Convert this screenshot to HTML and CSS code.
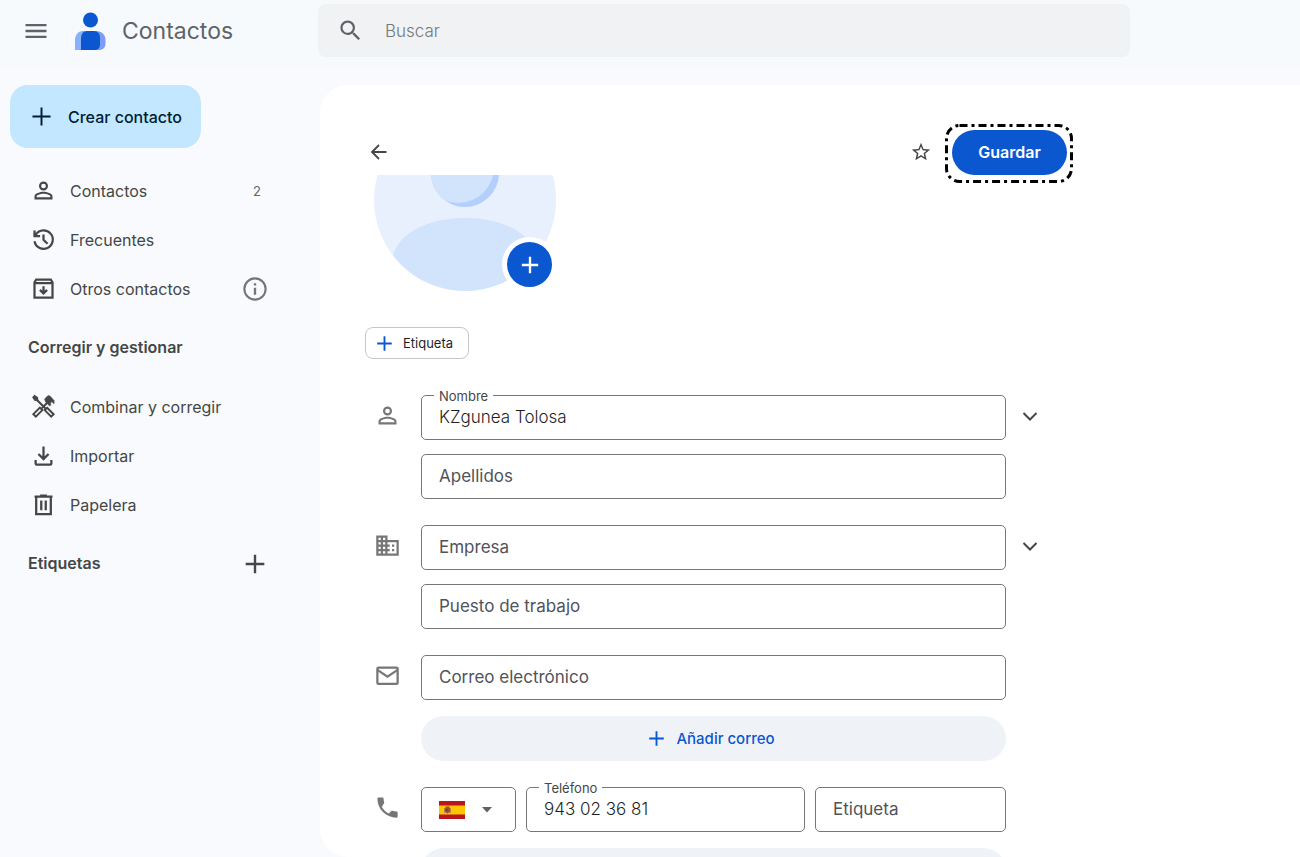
FILE: index.html
```html
<!DOCTYPE html>
<html lang="es">
<head>
<meta charset="utf-8">
<meta name="viewport" content="width=device-width, initial-scale=1">
<title>Contactos</title>
<link rel="stylesheet" href="styles.css">
</head>
<body>
<header class="topbar">
  <div class="brand">
    <button class="icon-btn" type="button" aria-label="Menú principal">
      <svg width="28" height="28" viewBox="0 0 24 24" fill="currentColor"><path d="M3 18h18v-2H3v2zm0-5h18v-2H3v2zm0-7v2h18V6H3z"/></svg>
    </button>
    <svg class="logo" width="32" height="40" viewBox="0 0 32 40" aria-hidden="true">
      <path d="M9 20h8v19H1V29c0-5 3-9 8-9z" fill="#8ab0fb"/>
      <path d="M15 20h7c6 0 9.500 4 9.500 9v3c0 5-3 7-6.500 7H15z" fill="#7c9cf8"/>
      <path d="M13 20h7c4 0 6 3 6 7v6c0 4-2 6-6 6H7V28c0-5 2-8 6-8z" fill="#0b57d0"/>
      <circle cx="16.500" cy="9" r="7.500" fill="#0b57d0"/>
    </svg>
    <span class="brand-name">Contactos</span>
  </div>
  <form class="search" role="search">
    <button class="icon-btn" type="button" aria-label="Buscar">
      <svg width="27" height="27" viewBox="0 0 24 24" fill="currentColor"><path d="M15.500 14h-.79l-.28-.27A6.470 6.470 0 0 0 16 9.500 6.500 6.500 0 1 0 9.500 16c1.610 0 3.090-.59 4.230-1.570l.27.28v.79l5 4.990L20.490 19l-4.990-5zm-6 0C7.010 14 5 11.990 5 9.500S7.010 5 9.500 5 14 7.010 14 9.500 11.990 14 9.500 14z"/></svg>
    </button>
    <input class="search-input" type="search" placeholder="Buscar" aria-label="Buscar">
  </form>
</header>

<div class="layout">
  <nav class="sidebar" aria-label="Navegación">
    <button class="create" type="button">
      <svg width="31" height="31" viewBox="0 0 24 24" fill="currentColor"><path d="M19 12.750h-6.250V19h-1.500v-6.250H5v-1.500h6.250V5h1.500v6.250H19z"/></svg>
      <span>Crear contacto</span>
    </button>
    <ul class="nav">
      <li class="nav-item"><a class="nav-link" href="#contactos">
        <svg width="27" height="27" viewBox="0 0 24 24" fill="currentColor"><path d="M12 12a4 4 0 1 0 0-8 4 4 0 0 0 0 8zm0-6.100a2.100 2.100 0 1 1 0 4.200 2.100 2.100 0 0 1 0-4.200zM12 13c-2.700 0-8 1.340-8 4v3h16v-3c0-2.660-5.330-4-8-4zm6.100 5.100H5.900V17c0-.64 3.130-2.100 6.100-2.100s6.100 1.460 6.100 2.100z"/></svg>
        Contactos</a><span class="count">2</span></li>
      <li class="nav-item"><a class="nav-link" href="#frecuentes">
        <svg width="27" height="27" viewBox="0 0 24 24" fill="none" stroke="currentColor" stroke-width="2"><path d="M4 13.500A8.200 8.200 0 1 0 5.300 7.500L4 9M4 4v5h5M12 7.500v4.700l3.600 3.600"/></svg>
        Frecuentes</a></li>
      <li class="nav-item"><a class="nav-link" href="#otros">
        <svg width="27" height="27" viewBox="0 0 24 24" fill="none" stroke="currentColor" stroke-width="2"><path d="M4 6.500 5.500 4h13L20 6.500V20H4zM4 7.300h16M12 10v6M8.800 13.200l3.200 3.200 3.200-3.200"/></svg>
        Otros contactos</a>
        <button class="icon-btn info" type="button" aria-label="Información">
          <svg width="28" height="28" viewBox="0 0 24 24" fill="currentColor"><path d="M11 7h2v2h-2zm0 4h2v6h-2zm1-9a10 10 0 1 0 0 20 10 10 0 0 0 0-20zm0 18.200a8.200 8.200 0 1 1 0-16.400 8.200 8.200 0 0 1 0 16.400z"/></svg>
        </button></li>
    </ul>
    <h2 class="nav-heading">Corregir y gestionar</h2>
    <ul class="nav">
      <li class="nav-item"><a class="nav-link" href="#combinar">
        <svg width="27" height="27" viewBox="0 0 24 24" fill="none" stroke="currentColor" stroke-width="1.800"><path d="M5.500 5.500 14 14M16 8 10.500 13.500"/><path d="M2.500 3.800 4 2.300 6.700 4 6.900 6.700 4.200 6.500z" fill="currentColor" stroke-width="1"/><path d="M8.800 13l2.200 2.200-5.800 5.800L3 18.800z"/><path d="M15.200 13.200l5.800 5.600-2.200 2.200-5.700-5.800z"/><path d="M13 5.400 16 2.200l2 .6 3.500 4-.2 2.700-1.900-1.800-1.300 1.400.5 1.400-1.200 1-3.700-3.800z" fill="currentColor" stroke-width=".500"/></svg>
        Combinar y corregir</a></li>
      <li class="nav-item"><a class="nav-link" href="#importar">
        <svg width="27" height="27" viewBox="0 0 24 24" fill="none" stroke="currentColor" stroke-width="2"><path d="M12 4v11M7.500 10.700 12 15.200l4.500-4.500M5 16v3a1 1 0 0 0 1 1h12a1 1 0 0 0 1-1v-3"/></svg>
        Importar</a></li>
      <li class="nav-item"><a class="nav-link" href="#papelera">
        <svg width="27" height="27" viewBox="0 0 24 24" fill="none" stroke="currentColor" stroke-width="2"><path d="M4 5h16M9 4h6M5.500 5v15.500h13V5M10 8.500v8.500M14 8.500v8.500"/></svg>
        Papelera</a></li>
    </ul>
    <div class="nav-heading-row">
      <h2 class="nav-heading">Etiquetas</h2>
      <button class="icon-btn" type="button" aria-label="Crear etiqueta">
        <svg width="32" height="32" viewBox="0 0 24 24" fill="currentColor"><path d="M19 12.900h-6.100V19h-1.800v-6.100H5v-1.800h6.100V5h1.800v6.100H19z"/></svg>
      </button>
    </div>
  </nav>

  <main class="panel">
    <div class="toolbar">
      <button class="icon-btn" type="button" aria-label="Atrás">
        <svg width="28" height="24" viewBox="0 0 28 24" fill="none" stroke="currentColor" stroke-width="1.800"><path d="M21.500 12H7.500M14 5l-7 7 7 7"/></svg>
      </button>
      <div class="actions">
        <button class="icon-btn" type="button" aria-label="Destacar">
          <svg width="22" height="22" viewBox="0 0 24 24" fill="currentColor"><path d="M22 9.240l-7.190-.62L12 2 9.190 8.630 2 9.240l5.460 4.730L5.820 21 12 17.270 18.180 21l-1.630-7.030L22 9.240zM12 15.400l-3.760 2.270 1-4.280-3.320-2.880 4.380-.38L12 6.100l1.710 4.040 4.380.38-3.320 2.880 1 4.280L12 15.400z"/></svg>
        </button>
        <div class="save-wrap">
          <button class="save" type="button">Guardar</button>
          <svg class="marker" viewBox="0 0 128 59" aria-hidden="true"><rect x="1.500" y="1.500" width="125" height="56" rx="13" fill="none" stroke="#000" stroke-width="3" stroke-dasharray="8 4 3 4"/></svg>
        </div>
      </div>
    </div>

    <div class="scroller">
      <div class="photo">
        <svg class="avatar" viewBox="0 0 182 182" aria-hidden="true">
          <defs>
            <clipPath id="disc"><circle cx="91" cy="91" r="91"/></clipPath>
            <clipPath id="head"><circle cx="91" cy="64" r="34"/></clipPath>
          </defs>
          <g clip-path="url(#disc)">
            <rect width="182" height="182" fill="#e8f0fe"/>
            <circle cx="91" cy="64" r="34" fill="#b4cffb"/>
            <circle cx="84" cy="58" r="36" fill="#d2e3fc" clip-path="url(#head)"/>
            <path d="M18 150c5-26 36-41 73-41s68 15 73 41v32H18z" fill="#d2e3fc"/>
          </g>
        </svg>
        <button class="photo-add" type="button" aria-label="Añadir foto">
          <svg width="28" height="28" viewBox="0 0 24 24" fill="currentColor"><path d="M19 13h-6v6h-2v-6H5v-2h6V5h2v6h6z"/></svg>
        </button>
      </div>

      <button class="chip" type="button">
        <svg width="25" height="25" viewBox="0 0 24 24" fill="currentColor"><path d="M19 12.900h-6.100V19h-1.800v-6.100H5v-1.800h6.100V5h1.800v6.100H19z"/></svg>
        Etiqueta
      </button>

      <form class="form">
        <section class="group">
          <svg class="group-icon" width="27" height="27" viewBox="0 0 24 24" fill="currentColor"><path d="M12 12a4 4 0 1 0 0-8 4 4 0 0 0 0 8zm0-6.100a2.100 2.100 0 1 1 0 4.200 2.100 2.100 0 0 1 0-4.200zM12 13c-2.700 0-8 1.340-8 4v3h16v-3c0-2.660-5.330-4-8-4zm6.100 5.100H5.900V17c0-.64 3.130-2.100 6.100-2.100s6.100 1.460 6.100 2.100z"/></svg>
          <div class="fields">
            <div class="field"><input class="box" id="nombre" type="text" value="KZgunea Tolosa"><label class="float" for="nombre">Nombre</label></div>
            <div class="field"><input class="box" type="text" placeholder="Apellidos" aria-label="Apellidos"></div>
          </div>
          <button class="icon-btn more" type="button" aria-label="Mostrar más campos de nombre"><svg width="24" height="24" viewBox="0 0 24 24" fill="none" stroke="currentColor" stroke-width="2"><path d="M5.500 9l6.500 6.500L18.500 9"/></svg></button>
        </section>

        <section class="group">
          <svg class="group-icon" width="27" height="27" viewBox="0 0 24 24" fill="currentColor"><path d="M12 7V3H2v18h20V7H12zM6 19H4v-2h2v2zm0-4H4v-2h2v2zm0-4H4V9h2v2zm0-4H4V5h2v2zm4 12H8v-2h2v2zm0-4H8v-2h2v2zm0-4H8V9h2v2zm0-4H8V5h2v2zm10 12h-8v-2h2v-2h-2v-2h2v-2h-2V9h8v10zm-2-8h-2v2h2v-2zm0 4h-2v2h2v-2z"/></svg>
          <div class="fields">
            <div class="field"><input class="box" type="text" placeholder="Empresa" aria-label="Empresa"></div>
            <div class="field"><input class="box" type="text" placeholder="Puesto de trabajo" aria-label="Puesto de trabajo"></div>
          </div>
          <button class="icon-btn more" type="button" aria-label="Mostrar más campos de empresa"><svg width="24" height="24" viewBox="0 0 24 24" fill="none" stroke="currentColor" stroke-width="2"><path d="M5.500 9l6.500 6.500L18.500 9"/></svg></button>
        </section>

        <section class="group">
          <svg class="group-icon" width="27" height="27" viewBox="0 0 24 24" fill="none" stroke="currentColor" stroke-width="2"><rect x="3" y="5" width="18" height="14.500" rx="1"/><path d="M3 7l9 6 9-6"/></svg>
          <div class="fields">
            <div class="field"><input class="box" type="email" placeholder="Correo electrónico" aria-label="Correo electrónico"></div>
            <button class="add" type="button">
              <svg width="25" height="25" viewBox="0 0 24 24" fill="currentColor"><path d="M19 12.900h-6.100V19h-1.800v-6.100H5v-1.800h6.100V5h1.800v6.100H19z"/></svg>
              Añadir correo
            </button>
          </div>
        </section>

        <section class="group">
          <svg class="group-icon" width="27" height="27" viewBox="0 0 24 24" fill="currentColor"><path d="M6.540 5c.06.89.21 1.760.45 2.590L8 11l-1.380-.21c1.440 2.830 3.760 5.140 6.590 6.590l2.200-2.200c.27-.27.67-.36 1.020-.24 1.120.37 2.330.57 3.570.57.55 0 1 .45 1 1V20c0 .55-.45 1-1 1C10.610 21 3 13.390 3 4c0-.55.45-1 1-1h3.500c.55 0 1 .45 1 1 0 1.250.2 2.450.57 3.570.11.35.03.74-.25 1.020l-2.200 2.200z"/></svg>
          <div class="fields">
            <div class="phone">
              <button class="box country" type="button" aria-haspopup="listbox" aria-label="País: España">
                <svg width="26" height="18" viewBox="0 0 26 18" aria-hidden="true"><path fill="#b8151c" d="M0 0h26v18H0z"/><path fill="#ffc400" d="M0 4.500h26v9H0z"/><path d="M5 7h1v5H5zM11 7h1v5h-1z" fill="#a58b45"/><path d="M6.500 5.500h4V7l.5.500V11l-2.500 1.500L6 11V7.500l.500-.500z" fill="#ad4a1e"/><path d="M7 8h1.500v2H7z" fill="#6b3b28"/></svg>
                <svg width="10" height="6" viewBox="0 0 10 6" fill="#5f6368"><path d="M0 0h10L5 5.500z"/></svg>
              </button>
              <div class="field"><input class="box" id="telefono" type="tel" value="943 02 36 81"><label class="float" for="telefono">Teléfono</label></div>
              <div class="field"><input class="box" type="text" placeholder="Etiqueta" aria-label="Etiqueta"></div>
            </div>
            <button class="add" type="button" aria-label="Añadir teléfono"></button>
          </div>
        </section>
      </form>
    </div>
  </main>
</div>
</body>
</html>
```
FILE: styles.css
```css
* { box-sizing: border-box; }

body {
  margin: 0;
  height: 100vh;
  display: flex;
  flex-direction: column;
  overflow: hidden;
  background: #f8fafd;
  color: #444746;
  font-family: Inter, "Open Sans", sans-serif;
  font-size: 16px;
}

button, input { font: inherit; color: inherit; }
button { cursor: pointer; }
svg { display: block; flex: none; }

.icon-btn {
  display: flex;
  padding: 0;
  border: 0;
  background: none;
}

/* Top bar */
.topbar {
  flex: none;
  display: flex;
  padding: 4px 170px 11px 0;
  background: #f6fafd;
}

.brand {
  flex: none;
  width: 318px;
  display: flex;
  align-items: center;
  padding-left: 22px;
  color: #5f6368;
}

.logo { margin-left: 24px; }
.brand-name { margin-left: 16px; font-size: 23px; }

.search {
  flex: 1;
  display: flex;
  align-items: center;
  gap: 21px;
  height: 53px;
  padding-left: 19px;
  border-radius: 8px;
  background: #f0f2f4;
  color: #5f6368;
}

.search-input {
  flex: 1;
  min-width: 0;
  padding: 0;
  border: 0;
  outline: 0;
  background: none;
  font-size: 17px;
  font-weight: 300;
}

.search-input::placeholder { color: #74787c; opacity: 1; }

.layout { flex: 1; min-height: 0; display: flex; padding-top: 17px; }

/* Sidebar */
.sidebar { flex: none; width: 320px; }

.create {
  display: flex;
  align-items: center;
  gap: 11px;
  height: 63px;
  margin: 0 0 18px 10px;
  padding: 0 19px 0 16px;
  border: 0;
  border-radius: 18px;
  background: #c2e7ff;
  color: #001d35;
  font-weight: 500;
}

.nav { margin: 0; padding: 0; list-style: none; }

.nav-item {
  display: flex;
  align-items: center;
  justify-content: space-between;
  height: 49px;
  padding: 0 51px 0 30px;
}

.nav-link {
  display: flex;
  align-items: center;
  gap: 13px;
  color: inherit;
  text-decoration: none;
}

.count { padding-right: 8px; font-size: 13px; color: #5f6368; }
.info { color: #747775; }

.nav-heading {
  margin: 0;
  padding-left: 28px;
  font-size: 16px;
  font-weight: 600;
  line-height: 69px;
}

.nav-heading-row {
  display: flex;
  align-items: center;
  justify-content: space-between;
  padding-right: 49px;
}

/* Editor panel */
.panel {
  flex: 1;
  min-width: 0;
  display: flex;
  flex-direction: column;
  padding-left: 45px;
  border-radius: 28px 0 0 28px;
  background: #fff;
  overflow: hidden;
}

.toolbar {
  flex: none;
  display: flex;
  align-items: center;
  justify-content: space-between;
  width: 100%;
  max-width: 708px;
  height: 90px;
  padding: 44px 6px 0 0;
}

.actions { display: flex; align-items: center; gap: 20px; }

.save-wrap { position: relative; }

.save {
  width: 115px;
  height: 45px;
  padding: 0;
  border: 0;
  border-radius: 23px;
  background: #0b57d0;
  color: #fff;
  font-weight: 600;
}

.marker {
  position: absolute;
  top: -6px;
  left: -7px;
  width: 128px;
  height: 59px;
  pointer-events: none;
}

.scroller { flex: 1; min-height: 0; overflow: hidden; }

.photo { position: relative; width: 182px; margin: -66px 0 36px 9px; }
.avatar { width: 182px; height: 182px; }

.photo-add {
  position: absolute;
  right: -1px;
  bottom: -1px;
  display: flex;
  align-items: center;
  justify-content: center;
  width: 55px;
  height: 55px;
  padding: 0;
  border: 5px solid #fff;
  border-radius: 50%;
  background: #0b57d0;
  color: #fff;
}

.chip {
  display: flex;
  align-items: center;
  gap: 6px;
  height: 32px;
  padding: 0 15px 0 6px;
  border: 1px solid #c4c7c5;
  border-radius: 8px;
  background: #fff;
  color: #1f1f1f;
  font-size: 13px;
}

.chip svg, .add { color: #0b57d0; }

.form {
  display: flex;
  flex-direction: column;
  gap: 26px;
  max-width: 689px;
  margin-top: 36px;
}

.group {
  display: grid;
  grid-template-columns: 47px minmax(0, 1fr) 48px;
  align-items: start;
  padding-left: 9px;
}

.group-icon { margin-top: 7px; color: #747775; }
.more { margin: 9px 0 0 12px; }

.fields { display: flex; flex-direction: column; gap: 14px; }

.field { position: relative; min-width: 0; }

.box {
  display: block;
  width: 100%;
  height: 45px;
  padding: 0 17px 2px;
  border: 1px solid #747775;
  border-radius: 5px;
  outline: 0;
  background: #fff;
  color: #1f1f1f;
  font-size: 17px;
  font-weight: 300;
}

.box::placeholder { color: #50535a; font-weight: 400; opacity: 1; }

.float {
  position: absolute;
  top: -8px;
  left: 13px;
  padding: 0 5px;
  background: #fff;
  font-size: 13px;
  line-height: 18px;
}

.phone {
  display: grid;
  grid-template-columns: 95px minmax(0, 279fr) minmax(0, 191fr);
  gap: 10px;
}

.country { display: flex; align-items: center; gap: 17px; padding-bottom: 0; }

.add {
  display: flex;
  align-items: center;
  justify-content: center;
  gap: 7px;
  width: 100%;
  height: 45px;
  margin-top: 2px;
  padding: 0 8px 0 0;
  border: 0;
  border-radius: 23px;
  background: #eff3f8;
  font-size: 15px;
  font-weight: 500;
}
```
